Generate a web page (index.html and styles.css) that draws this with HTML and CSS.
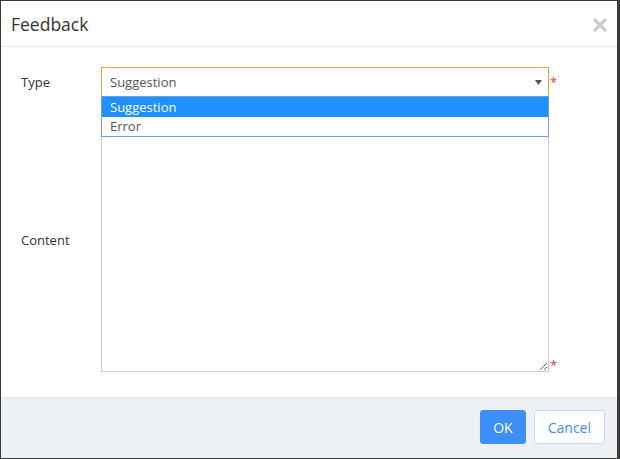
FILE: index.html
```html
<!DOCTYPE html>
<html>
<head>
<meta charset="utf-8">
<link rel="stylesheet" href="styles.css">
</head>
<body>
<div class="dialog">
  <div class="header">
    <span class="title">Feedback</span>
    <svg class="close" width="16" height="16" viewBox="0 0 16 16"><path d="M2 2 L14 14 M14 2 L2 14" stroke="#c8c8c8" stroke-width="3" fill="none"/></svg>
  </div>
  <div class="body">
    <div class="form">
      <label class="label">Type</label>
      <div class="field">
        <div class="select-wrap">
          <div class="select">
            <span>Suggestion</span>
            <svg class="arrow" width="7" height="5" viewBox="0 0 7 5"><path d="M0 0 H7 L3.5 5 Z" fill="#555"/></svg>
          </div>
          <ul class="dropdown">
            <li class="opt active">Suggestion</li>
            <li class="opt">Error</li>
          </ul>
        </div>
        <span class="req">*</span>
      </div>
      <label class="label">Content</label>
      <div class="field field-bottom">
        <textarea class="textarea"></textarea>
        <span class="req">*</span>
      </div>
    </div>
  </div>
  <div class="footer">
    <button class="btn btn-primary">OK</button>
    <button class="btn btn-default">Cancel</button>
  </div>
</div>
</body>
</html>
```

FILE: styles.css
```css
* { box-sizing: border-box; }
html, body { margin: 0; padding: 0; background: #fff; }
body { font-family: "Open Sans", "Liberation Sans", sans-serif; }

.dialog {
  width: 620px;
  height: 459px;
  border: 1px solid #3a3a3a;
  border-right: 3px solid #3a3a3a;
  display: flex;
  flex-direction: column;
  background: #fff;
}

.header {
  height: 46px;
  border-bottom: 1px solid #e5e5e5;
  display: flex;
  align-items: center;
  justify-content: space-between;
  padding: 0 9px 0 10px;
  flex: none;
}
.title { font-size: 17.5px; color: #333; }
.close { display: block; margin-top: 2px; }

.body {
  flex: 1;
  padding: 20px 0 0 20px;
}
.form {
  display: grid;
  grid-template-columns: 80px auto;
  row-gap: 11px;
  align-items: center;
}
.label { font-size: 13px; color: #333; }
.field { display: flex; align-items: flex-start; }
.field-bottom { align-items: flex-end; }

.select-wrap { position: relative; width: 448px; }
.select {
  height: 30px;
  border: 1px solid #f09b4a;
  display: flex;
  align-items: center;
  justify-content: space-between;
  padding: 0 6px 0 8px;
  font-size: 13px;
  color: #555;
}
.arrow { display: block; margin-top: 0; }

.dropdown {
  position: absolute;
  left: 0;
  top: 29px;
  width: 448px;
  margin: 0;
  padding: 0;
  list-style: none;
  border: 1px solid #719ee0;
  background: #fff;
  z-index: 2;
}
.opt {
  height: 19px;
  line-height: 19px;
  padding-left: 8px;
  font-size: 13px;
  color: #555;
}
.opt.active { background: #1e90ff; color: #fff; height: 20px; line-height: 20px; }

.req {
  color: #ee3333;
  font-size: 13px;
  line-height: 13px;
  margin-left: 1px;
  margin-top: 9px;
}
.field-bottom .req { margin-bottom: 0; }

.textarea {
  width: 448px;
  height: 264px;
  border: 1px solid #cccccc;
  resize: vertical;
  margin: 0;
  padding: 4px 8px;
  font-family: inherit;
  font-size: 13px;
  display: block;
  outline: none;
}

.footer {
  height: 61px;
  flex: none;
  background: #edf1f6;
  border-top: 1px solid #e1e5ea;
  display: flex;
  justify-content: flex-end;
  align-items: flex-start;
  gap: 8px;
  padding: 12px 12px 0 0;
}
.btn {
  height: 34px;
  padding: 0 12px;
  font-family: inherit;
  font-size: 14px;
  border-radius: 3px;
  cursor: pointer;
}
.btn-primary { background: #3e8ef7; border: 1px solid #3e8ef7; color: #fff; }
.btn-default { background: #fff; border: 1px solid #c4dbfb; color: #3e8ef7; padding: 0 13px; }
```
